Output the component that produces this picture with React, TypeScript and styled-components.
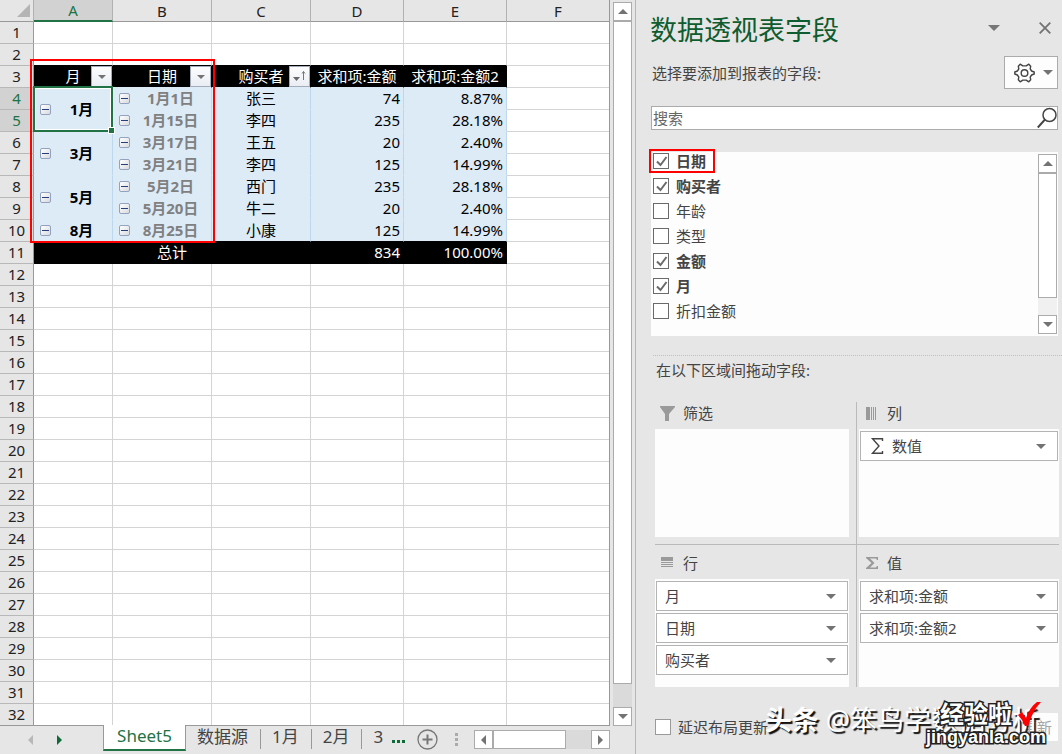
import React from "react";
import styled, { createGlobalStyle, css } from "styled-components";

const sans = '"Noto Sans", "Noto Sans CJK SC", sans-serif';
const green = "#217346";

const GlobalStyle = createGlobalStyle`
  *, *::before, *::after { box-sizing: border-box; }
  body { margin: 0; background: #e6e6e6; font: 15px/20px ${sans}; color: #444; }
  button, input { font: inherit; color: inherit; margin: 0; padding: 0; border-radius: 0; }
`;

const Page = styled.div`
  display: grid;
  grid-template-columns: minmax(0, 636fr) minmax(0, 426fr);
  min-height: 100vh;
  position: relative;
  overflow: hidden;
`;

/* ---------- worksheet ---------- */

const Workbook = styled.main`
  display: flex;
  flex-direction: column;
  border-right: 1px solid #b5b5b5;
`;

const SheetArea = styled.div`
  display: flex;
  gap: 3px;
  padding-right: 3px;
`;

const GridWrap = styled.div`
  position: relative;
  flex: 1;
  min-width: 0;
`;

const Grid = styled.table`
  width: 100%;
  table-layout: fixed;
  border-collapse: separate;
  border-spacing: 0;
  background: #fff;
  color: #000;
  line-height: 21px;
  border-right: 1px solid #999;
`;

const ColHead = styled.th<{ $on?: boolean }>`
  height: 22px;
  padding: 0;
  font-weight: 400;
  line-height: 20px;
  background: ${(p) => (p.$on ? "#d2d2d2" : "#e6e6e6")};
  color: ${(p) => (p.$on ? green : "#222")};
  border-right: 1px solid #b1b1b1;
  border-bottom: ${(p) => (p.$on ? `2px solid ${green}` : "1px solid #999")};
  &:last-child { border-right: 0; }
`;

const Corner = styled(ColHead)`
  border-right-color: #b1b1b1;
  svg { display: block; margin-left: 17px; }
`;

const RowHead = styled.th<{ $on?: boolean }>`
  height: 22px;
  padding: 0;
  font-weight: 400;
  background: ${(p) => (p.$on ? "#d2d2d2" : "#e6e6e6")};
  color: ${(p) => (p.$on ? green : "#222")};
  border-right: 1px solid #999;
  border-bottom: 1px solid #b8b8b8;
`;

type Tone = "plain" | "above" | "head" | "body" | "last" | "total";

const tones = {
  plain: css`border-color: #d4d4d4;`,
  above: css`border-right-color: #d4d4d4; border-bottom-color: #000;`,
  head: css`background: #000; color: #fff; border-right-color: #000; border-bottom-color: #ddebf7;`,
  body: css`background: #ddebf7; border-right-color: #bdd7ee; border-bottom-color: #ddebf7;`,
  last: css`background: #ddebf7; border-right-color: #bdd7ee; border-bottom-color: #000;`,
  total: css`background: #000; color: #fff; border-color: #000;`,
};

const Cell = styled.td<{ $tone?: Tone; $num?: boolean }>`
  position: relative;
  height: 22px;
  padding: 0 ${(p) => (p.$num ? "3px" : "0")} 0 0;
  text-align: ${(p) => (p.$num ? "right" : "center")};
  white-space: nowrap;
  border: 0 solid;
  border-right-width: 1px;
  border-bottom-width: 1px;
  ${(p) => tones[p.$tone ?? "plain"]}
  &:last-child { border-right-width: 0; }
`;

const Group = styled.div<{ $muted?: boolean }>`
  display: flex;
  align-items: center;
  padding-left: 6px;
  font-weight: 700;
  color: ${(p) => (p.$muted ? "#808080" : "#000")};
  span { flex: 1; }
`;

const Collapse = styled.button`
  width: 11px;
  height: 11px;
  border: 1px solid #93a3bf;
  border-radius: 2px;
  background: linear-gradient(135deg, #fff, #d9dade);
  display: grid;
  place-items: center;
  &::before { content: ""; width: 7px; height: 1px; background: #27407c; }
`;

const FilterButton = styled.button`
  position: absolute;
  right: 0;
  top: 0;
  width: 21px;
  height: 21px;
  border: 1px solid #a3acba;
  background: linear-gradient(#fdfdfe, #e9edf3);
  display: grid;
  place-items: center;
`;

const Selection = styled.div`
  position: absolute;
  inset: -2px -1px -1px -1px;
  border: 2px solid ${green};
  box-shadow: inset 0 0 0 1px #fff;
  z-index: 1;
  pointer-events: none;
  &::after {
    content: "";
    position: absolute;
    right: -4px;
    bottom: -4px;
    width: 7px;
    height: 7px;
    border: 1px solid #fff;
    background: ${green};
  }
`;

const SheetMark = styled.div`
  position: absolute;
  left: 30px;
  top: 59px;
  width: 185px;
  height: 184px;
  border: 2px solid #f00;
  pointer-events: none;
  z-index: 2;
`;

/* ---------- scroll bars ---------- */

const ScrollBar = styled.div<{ $dir: "row" | "column"; $track: string }>`
  display: flex;
  flex-direction: ${(p) => p.$dir};
  background: ${(p) => p.$track};
  ${(p) => (p.$dir === "column" ? "width: 19px;" : "height: 19px;")}
`;

const ScrollButton = styled.button`
  flex: none;
  width: 19px;
  height: 19px;
  background: #fff;
  border: 1px solid #ababab;
  display: grid;
  place-items: center;
`;

const Thumb = styled.div<{ $rest: number }>`
  flex: 1;
  background: #fff;
  border: 1px solid #ababab;
  ${(p) => `margin-bottom: ${p.$rest}px;`}
`;

const WideThumb = styled(Thumb)`
  margin: 0 25px 0 0;
`;

const SheetScroll = styled(ScrollBar)`
  margin-top: 2px;
`;

/* ---------- sheet tabs ---------- */

const TabBar = styled.nav`
  display: flex;
  align-items: flex-start;
  height: 28px;
  padding-right: 25px;
  font-size: 17px;
  position: relative;
`;

const TabEdge = styled.div`
  border-top: 1px solid #999;
  margin-top: -1px;
  margin-right: 25px;
  position: relative;
`;

const NavArrows = styled.div`
  display: flex;
  gap: 24px;
  width: 103px;
  padding: 9px 0 0 28px;
`;

const BareButton = styled.button`
  display: block;
  border: 0;
  background: none;
  line-height: 0;
  svg { display: block; }
`;

const ActiveTab = styled.button`
  width: 83px;
  height: 26px;
  margin-top: -1px;
  background: #fff;
  border: 1px solid #999;
  border-top: 0;
  border-bottom: 2px solid ${green};
  color: ${green};
  line-height: 22px;
  padding-bottom: 2px;
`;

const Tab = styled.button<{ $cut?: boolean }>`
  height: 20px;
  margin-top: 3px;
  padding: 0 ${(p) => (p.$cut ? "9px" : "12px")} 0 11px;
  border: 0;
  border-right: ${(p) => (p.$cut ? 0 : "1px solid #999")};
  background: none;
  line-height: 16px;
  display: flex;
`;

const MoreTabs = styled(BareButton)`
  padding-top: 14px;
`;

const AddTab = styled(BareButton)`
  padding: 3px 0 0 11px;
`;

const Grip = styled.svg`
  margin: 6px 0 0 17px;
`;

const HScroll = styled(ScrollBar)`
  width: 136px;
  margin: 4px 0 0 auto;
`;

/* ---------- field pane ---------- */

const Pane = styled.aside`
  padding: 10px 4px 0 15px;
  background: #e6e6e6;
`;

const PaneHeader = styled.header`
  display: flex;
  align-items: center;
  height: 40px;
  padding-right: 7px;
  gap: 39px;
`;

const Title = styled.h1`
  flex: 1;
  margin: 0 0 0 -1px;
  font-size: 27px;
  font-weight: 400;
  line-height: 40px;
  color: #0e5c2f;
`;

const HeaderTool = styled(BareButton)`
  padding-bottom: 5px;
`;

const Prompt = styled.div`
  display: flex;
  justify-content: space-between;
  align-items: center;
  margin-top: 6px;
  padding-left: 1px;
`;

const Tools = styled.button`
  display: flex;
  align-items: center;
  gap: 8px;
  width: 54px;
  height: 33px;
  padding-left: 9px;
  border: 1px solid #ababab;
  background: #fdfdfd;
`;

const Search = styled.label`
  display: flex;
  align-items: center;
  margin-top: 17px;
  height: 24px;
  border: 1px solid #ababab;
  background: #fff;
  input {
    flex: 1;
    min-width: 0;
    height: 22px;
    border: 0;
    outline: 0;
    padding-left: 1px;
    background: none;
  }
  input::placeholder { color: #666; opacity: 1; }
`;

const FieldList = styled.div`
  display: flex;
  justify-content: space-between;
  margin-top: 22px;
  height: 184px;
  padding: 0 1px 0 2px;
  background: #fdfdfd;
`;

const Fields = styled.ul`
  list-style: none;
  margin: 0;
  padding: 0;
`;

const Field = styled.li`
  position: relative;
  height: 25px;
`;

const Check = styled.label<{ $bold?: boolean }>`
  display: flex;
  align-items: center;
  gap: 7px;
  height: 18px;
  font-weight: ${(p) => (p.$bold ? 700 : 400)};
`;

const Box = styled.span<{ $soft?: boolean }>`
  display: grid;
  input, svg { grid-area: 1 / 1; }
  input {
    appearance: none;
    width: 16px;
    height: 16px;
    border: 1px solid ${(p) => (p.$soft ? "#9a9a9a" : "#6a6a6a")};
    background: #fff;
  }
  svg { pointer-events: none; }
  input:not(:checked) + svg { display: none; }
`;

const FieldMark = styled.div`
  position: absolute;
  left: -4px;
  top: -3px;
  width: 66px;
  height: 24px;
  border: 2px solid #f00;
  pointer-events: none;
`;

const ListScroll = styled(ScrollBar)`
  margin: 2px 0;
`;

const Divider = styled.hr`
  height: 0;
  margin: 19px -4px 0 2px;
  border: 0;
  border-top: 1px dotted #c0c0c0;
`;

const Hint = styled.p`
  margin: 4px 0 0 5px;
`;

const Areas = styled.div`
  display: grid;
  grid-template-columns: minmax(0, 201fr) minmax(0, 203fr);
  margin: 22px -1px 0 4px;
`;

const Area = styled.section<{ $right?: boolean; $lower?: boolean }>`
  padding: ${(p) => (p.$lower ? "7px" : "0")} ${(p) => (p.$right ? "0" : "7px")}
    ${(p) => (p.$lower ? "0" : "7px")} ${(p) => (p.$right ? "2px" : "0")};
  border-left: ${(p) => (p.$right ? "1px solid #bababa" : "0")};
  border-bottom: ${(p) => (p.$lower ? "0" : "1px solid #bababa")};
`;

const AreaTitle = styled.h2<{ $right?: boolean }>`
  display: flex;
  align-items: center;
  gap: ${(p) => (p.$right ? "9px" : "8px")};
  margin: 0 0 5px;
  padding-left: ${(p) => (p.$right ? "7px" : "5px")};
  font-size: 15px;
  font-weight: 400;
  line-height: 22px;
`;

const Drop = styled.div`
  display: flex;
  flex-direction: column;
  gap: 2px;
  min-height: 108px;
  padding: 2px 1px;
  background: #fdfdfd;
`;

const Pill = styled.button`
  display: flex;
  align-items: center;
  gap: 6px;
  height: 30px;
  padding: 0 11px 0 8px;
  border: 1px solid #b4b4b4;
  background: #fff;
  text-align: left;
  span { flex: 1; }
  span:not(:first-child) { padding-left: 2px; }
`;

const Footer = styled.div`
  display: flex;
  justify-content: space-between;
  align-items: center;
  margin: 26px 0 0 4px;
`;

const Update = styled.button`
  width: 42px;
  height: 28px;
  border: 0;
  background: #fdfdfd;
  color: #a6a6a6;
`;

/* ---------- watermark ---------- */

const Watermark = styled.div`
  position: absolute;
  right: 23px;
  bottom: 14px;
  font-size: 27px;
  line-height: 40px;
  white-space: pre;
  color: #fff;
  text-shadow: 2px 2px 1px #111;
  pointer-events: none;
`;

const Stamp = styled.div`
  position: absolute;
  right: 16px;
  bottom: 7px;
  display: flex;
  flex-direction: column;
  align-items: flex-end;
  color: #fff;
  font-weight: 700;
  -webkit-text-stroke: 3px #222;
  paint-order: stroke fill;
  pointer-events: none;
`;

const StampTop = styled.div`
  display: flex;
  gap: 5px;
  padding-right: 5px;
  font-size: 24px;
  line-height: 26px;
`;

const StampUrl = styled.div`
  font-family: "Liberation Sans", sans-serif;
  font-size: 18px;
  line-height: 20px;
`;

/* ---------- small drawings ---------- */

type Dir = "up" | "down" | "left" | "right";
const paths: Record<Dir, string> = {
  down: "M0 0H10L5 5Z",
  up: "M0 5H10L5 0Z",
  left: "M5 0V10L0 5Z",
  right: "M0 0V10L5 5Z",
};
const Arrow = ({ dir = "down", size = 10, fill = "#737373" }: { dir?: Dir; size?: number; fill?: string }) => {
  const flat = dir === "up" || dir === "down";
  return (
    <svg width={flat ? size : size / 2} height={flat ? size / 2 : size} viewBox={flat ? "0 0 10 5" : "0 0 5 10"}>
      <path d={paths[dir]} fill={fill} />
    </svg>
  );
};

const SortMark = () => (
  <svg width="15" height="13" viewBox="0 0 15 13">
    <path d="M1 7H8L4.500 11Z" fill="#666" />
    <path d="M11.500 10V1.500M10 3.500L11.500 1.500L13 3.500" fill="none" stroke="#777" />
  </svg>
);

const Gear = () => (
  <svg width="21" height="20" viewBox="0 0 21 20" fill="none" stroke="#444" strokeWidth="1.400" strokeLinejoin="round">
    <path d="M6.200 1.200L8.800 2.900H12.200L14.800 1.200L16.700 3.200L16.200 5.800L17.600 8L20.200 9V11L17.600 12L16.200 14.200L16.700 16.800L14.800 18.800L12.200 17.100H8.800L6.200 18.800L4.300 16.800L4.800 14.200L3.400 12L.8 11V9L3.400 8L4.800 5.800L4.300 3.200Z" />
    <circle cx="10.500" cy="10" r="3.300" />
  </svg>
);

const Lens = () => (
  <svg width="20" height="22" viewBox="0 0 20 22" fill="none" stroke="#444" strokeWidth="1.500">
    <circle cx="12.500" cy="8" r="6.500" />
    <path d="M8 12.500L.8 20.500" strokeWidth="1.900" />
  </svg>
);

const Funnel = () => (
  <svg width="15" height="15" viewBox="0 0 15 15">
    <path d="M0 0H15V1L9 8V15H5V8L0 1Z" fill="#9a9a9a" />
  </svg>
);

const ColumnsMark = () => (
  <svg width="12" height="13" viewBox="0 0 12 13">
    <path d="M0 0H4V13H0ZM5 0H6V13H5ZM7 0H8V13H7ZM9 0H10V13H9Z" fill="#9a9a9a" />
  </svg>
);

const RowsMark = () => (
  <svg width="15" height="12" viewBox="0 0 15 12">
    <path d="M1 0H13V4H1ZM1 5H13V6H1ZM1 7H13V8H1ZM1 9H13V10H1Z" fill="#9a9a9a" />
  </svg>
);

const BigSigma = () => (
  <svg width="15" height="16" viewBox="0 0 15 16">
    <path d="M13.500 3V.7H3.500L10 8L3.500 15.300H13.500V13" fill="none" stroke="#444" strokeWidth="1.400" />
  </svg>
);

const SmallSigma = () => (
  <svg width="12" height="12" viewBox="0 0 12 12">
    <path d="M0 0H12V3H11L10 1.500H4L8.500 6L4 10.500H10L11 9H12V12H0V11L5.500 6L0 1Z" fill="#9a9a9a" />
  </svg>
);

const Tick = () => (
  <svg width="16" height="16" viewBox="0 0 16 16">
    <path d="M4 8.500L7.500 12L13.500 4" fill="none" stroke="#6a6a6a" strokeWidth="2" />
  </svg>
);

/* ---------- data ---------- */

type Entry = { month?: string; span?: number; date: string; buyer: string; sum: string; share: string };
const entries: Entry[] = [
  { month: "1月", span: 2, date: "1月1日", buyer: "张三", sum: "74", share: "8.87%" },
  { date: "1月15日", buyer: "李四", sum: "235", share: "28.18%" },
  { month: "3月", span: 2, date: "3月17日", buyer: "王五", sum: "20", share: "2.40%" },
  { date: "3月21日", buyer: "李四", sum: "125", share: "14.99%" },
  { month: "5月", span: 2, date: "5月2日", buyer: "西门", sum: "235", share: "28.18%" },
  { date: "5月20日", buyer: "牛二", sum: "20", share: "2.40%" },
  { month: "8月", span: 1, date: "8月25日", buyer: "小康", sum: "125", share: "14.99%" },
];

const fields = [
  { name: "日期", on: true, marked: true },
  { name: "购买者", on: true },
  { name: "年龄", on: false },
  { name: "类型", on: false },
  { name: "金额", on: true },
  { name: "月", on: true },
  { name: "折扣金额", on: false },
];

const columns = ["A", "B", "C", "D", "E", "F"];

const EmptyRow = ({ n, above }: { n: number; above?: boolean }) => (
  <tr>
    <RowHead scope="row">{n}</RowHead>
    {columns.map((c) => (
      <Cell key={c} $tone={above && c !== "F" ? "above" : "plain"} />
    ))}
  </tr>
);

const Worksheet = () => (
  <GridWrap>
    <Grid>
      <colgroup>
        <col style={{ width: 34 }} />
        <col style={{ width: 79 }} />
        <col style={{ width: 99 }} />
        <col style={{ width: 99 }} />
        <col style={{ width: 93 }} />
        <col style={{ width: 103 }} />
        <col />
      </colgroup>
      <thead>
        <tr>
          <Corner>
            <svg width="13" height="13" viewBox="0 0 13 13"><path d="M13 0V13H0Z" fill="#b4b4b4" /></svg>
          </Corner>
          {columns.map((c) => (
            <ColHead key={c} scope="col" $on={c === "A"}>{c}</ColHead>
          ))}
        </tr>
      </thead>
      <tbody>
        <EmptyRow n={1} />
        <EmptyRow n={2} above />
        <tr>
          <RowHead scope="row">3</RowHead>
          <Cell $tone="head">月<FilterButton aria-label="筛选月"><Arrow size={8} /></FilterButton></Cell>
          <Cell $tone="head">日期<FilterButton aria-label="筛选日期"><Arrow size={8} /></FilterButton></Cell>
          <Cell $tone="head">购买者<FilterButton aria-label="排序购买者"><SortMark /></FilterButton></Cell>
          <Cell $tone="head">求和项:金额</Cell>
          <Cell $tone="head">求和项:金额2</Cell>
          <Cell />
        </tr>
        {entries.map((e, i) => {
          const tone: Tone = i === entries.length - 1 ? "last" : "body";
          return (
            <tr key={e.date}>
              <RowHead scope="row" $on={i < 2}>{i + 4}</RowHead>
              {e.month && (
                <Cell rowSpan={e.span} $tone={tone}>
                  <Group><Collapse aria-label={`折叠${e.month}`} /><span>{e.month}</span></Group>
                  {i === 0 && <Selection />}
                </Cell>
              )}
              <Cell $tone={tone}>
                <Group $muted><Collapse aria-label={`折叠${e.date}`} /><span>{e.date}</span></Group>
              </Cell>
              <Cell $tone={tone}>{e.buyer}</Cell>
              <Cell $tone={tone} $num>{e.sum}</Cell>
              <Cell $tone={tone} $num>{e.share}</Cell>
              <Cell />
            </tr>
          );
        })}
        <tr>
          <RowHead scope="row">11</RowHead>
          <Cell $tone="total" colSpan={3}>总计</Cell>
          <Cell $tone="total" $num>834</Cell>
          <Cell $tone="total" $num>100.00%</Cell>
          <Cell />
        </tr>
        {Array.from({ length: 21 }, (_, i) => (
          <EmptyRow key={i} n={i + 12} />
        ))}
      </tbody>
    </Grid>
    <SheetMark />
  </GridWrap>
);

const Tabs = () => (
  <>
    <TabEdge />
    <TabBar>
      <NavArrows>
        <BareButton aria-label="上一个"><Arrow dir="left" fill="#b8b8b8" /></BareButton>
        <BareButton aria-label="下一个"><Arrow dir="right" fill="#0e6b38" /></BareButton>
      </NavArrows>
      <ActiveTab>Sheet5</ActiveTab>
      <Tab>数据源</Tab>
      <Tab>1月</Tab>
      <Tab>2月</Tab>
      <Tab $cut>3</Tab>
      <MoreTabs aria-label="更多">
        <svg width="14" height="3" viewBox="0 0 14 3"><path d="M0 0H3V3H0ZM5 0H8V3H5ZM10 0H13V3H10Z" fill="#0e6b38" /></svg>
      </MoreTabs>
      <AddTab aria-label="新建工作表">
        <svg width="21" height="21" viewBox="0 0 21 21" fill="none" stroke="#777">
          <circle cx="10.500" cy="10.500" r="9.500" strokeWidth="1.300" />
          <path d="M5.500 10.500H15.500M10.500 5.500V15.500" strokeWidth="2" />
        </svg>
      </AddTab>
      <Grip width="3" height="14" viewBox="0 0 3 14"><path d="M0 1H3V4H0ZM0 6H3V9H0ZM0 11H3V14H0Z" fill="#ababab" /></Grip>
      <HScroll $dir="row" $track="#dadada">
        <ScrollButton aria-label="向左"><Arrow dir="left" /></ScrollButton>
        <WideThumb $rest={0} />
        <ScrollButton aria-label="向右"><Arrow dir="right" /></ScrollButton>
      </HScroll>
    </TabBar>
  </>
);

const FieldPane = () => (
  <Pane>
    <PaneHeader>
      <Title>数据透视表字段</Title>
      <HeaderTool aria-label="任务窗格选项"><Arrow size={12} fill="#777" /></HeaderTool>
      <HeaderTool aria-label="关闭">
        <svg width="12" height="12" viewBox="0 0 12 12"><path d="M.7 .7L11.300 11.300M11.300 .7L.7 11.300" stroke="#737373" strokeWidth="1.800" /></svg>
      </HeaderTool>
    </PaneHeader>
    <Prompt>
      选择要添加到报表的字段:
      <Tools aria-label="工具"><Gear /><Arrow /></Tools>
    </Prompt>
    <Search>
      <input type="text" placeholder="搜索" aria-label="搜索" />
      <Lens />
    </Search>
    <FieldList>
      <Fields>
        {fields.map((f) => (
          <Field key={f.name}>
            <Check $bold={f.on}>
              <Box><input type="checkbox" defaultChecked={f.on} /><Tick /></Box>
              {f.name}
            </Check>
            {f.marked && <FieldMark />}
          </Field>
        ))}
      </Fields>
      <ListScroll $dir="column" $track="#f0f0f0">
        <ScrollButton aria-label="向上"><Arrow dir="up" /></ScrollButton>
        <Thumb $rest={17} />
        <ScrollButton aria-label="向下"><Arrow /></ScrollButton>
      </ListScroll>
    </FieldList>
    <Divider />
    <Hint>在以下区域间拖动字段:</Hint>
    <Areas>
      <Area>
        <AreaTitle><Funnel />筛选</AreaTitle>
        <Drop />
      </Area>
      <Area $right>
        <AreaTitle $right><ColumnsMark />列</AreaTitle>
        <Drop>
          <Pill><BigSigma /><span>数值</span><Arrow /></Pill>
        </Drop>
      </Area>
      <Area $lower>
        <AreaTitle><RowsMark />行</AreaTitle>
        <Drop>
          <Pill><span>月</span><Arrow /></Pill>
          <Pill><span>日期</span><Arrow /></Pill>
          <Pill><span>购买者</span><Arrow /></Pill>
        </Drop>
      </Area>
      <Area $right $lower>
        <AreaTitle $right><SmallSigma />值</AreaTitle>
        <Drop>
          <Pill><span>求和项:金额</span><Arrow /></Pill>
          <Pill><span>求和项:金额2</span><Arrow /></Pill>
        </Drop>
      </Area>
    </Areas>
    <Footer>
      <Check>
        <Box $soft><input type="checkbox" /><Tick /></Box>
        延迟布局更新
      </Check>
      <Update disabled>更新</Update>
    </Footer>
  </Pane>
);

export default function App() {
  return (
    <Page>
      <GlobalStyle />
      <Workbook>
        <SheetArea>
          <Worksheet />
          <SheetScroll $dir="column" $track="#dadada">
            <ScrollButton aria-label="向上"><Arrow dir="up" /></ScrollButton>
            <Thumb $rest={23} />
            <ScrollButton aria-label="向下"><Arrow /></ScrollButton>
          </SheetScroll>
        </SheetArea>
        <Tabs />
      </Workbook>
      <FieldPane />
      <Watermark><b>头条</b> @笨鸟学数据分析</Watermark>
      <Stamp>
        <StampTop>
          经验啦
          <svg width="24" height="26" viewBox="0 0 24 26"><path d="M1 14L5 11L9 17Q13 6 20 1H24Q16 9 11 25H8Q5 18 1 14Z" fill="#f00" /></svg>
        </StampTop>
        <StampUrl>jingyanla.com</StampUrl>
      </Stamp>
    </Page>
  );
}
